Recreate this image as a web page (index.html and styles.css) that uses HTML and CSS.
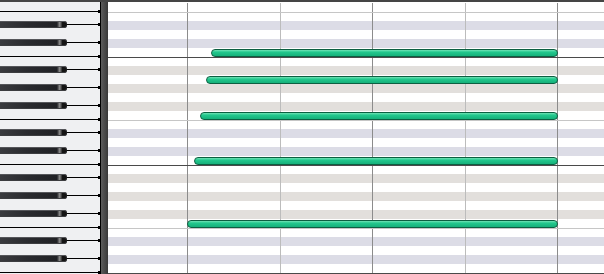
FILE: index.html
```html
<!DOCTYPE html>
<html lang="en">

<head>
    <meta charset="UTF-8">
    <meta name="viewport" content="width=device-width, initial-scale=1.0">
    <title>Piano roll</title>
    <link rel="stylesheet" href="styles.css">
</head>

<body>

    <div class="roll">
        <div class="keys"></div>
        <div class="split"></div>
        <div class="grid"></div>
    </div>

    <script>
        // rows from the top, one octave, repeated
        let scale = ['F', 'E', 'D#', 'D', 'C#', 'C', 'B', 'A#', 'A', 'G#', 'G', 'F#'];

        let notes = [
            { row: 5, start: 103, len: 347 },
            { row: 8, start: 98, len: 352 },
            { row: 12, start: 92, len: 358 },
            { row: 17, start: 86, len: 364 },
            { row: 24, start: 79, len: 371 }
        ];

        let elKeys = document.querySelector('.keys');
        let elGrid = document.querySelector('.grid');

        for (let i = 0; i < 31; i++) {
            let name = scale[i % 12];
            let black = name.indexOf('#') > -1;
            let group = 'CDE'.indexOf(name[0]) > -1 ? 'lav' : 'bei';

            let key = '';
            if (black) {
                key = '<div class="bk"></div><div class="tick"></div>';
            } else if (name == 'E' || name == 'B') {
                key = '<div class="ln"></div>';
            }
            elKeys.innerHTML += `<div class="kr">${key}</div>`;

            let cls = 'gr';
            if (black) cls += ' ' + group;
            if (name == 'E') cls += ' e';
            if (name == 'B') cls += ' b';

            let note = '';
            notes.forEach(element => {
                if (element.row == i) {
                    note = `<div class="note" style="margin-left: ${element.start}px; width: ${element.len}px;"></div>`;
                }
            });
            elGrid.innerHTML += `<div class="${cls}">${note}</div>`;
        }
    </script>

</body>

</html>
```

FILE: styles.css
```css
body {
    margin: 0;
    background-color: #ffffff;
    overflow: hidden;
}

.roll {
    height: 272px;
    display: flex;
    border-top: 2px solid #454545;
}

.keys {
    width: 100px;
    padding-top: 1px;
    border-right: 1px solid #000000;
    background-color: #eff0f2;
    overflow: hidden;
}

.split {
    width: 7px;
    background: linear-gradient(to right, #5c5c5c, #474747 60%, #383838);
}

.grid {
    flex: 1;
    padding-top: 1px;
    overflow: hidden;
}

/* keyboard */

.kr {
    height: 9px;
    display: flex;
    align-items: flex-start;
}

.bk {
    width: 67px;
    height: 7px;
    box-sizing: border-box;
    border-radius: 0 3px 3px 0;
    background: linear-gradient(to right, #3a3b3f, #2a2b2f 40%, #202125 85%, #8a8a8a 89%, #5a5a5a 91%, #151515 93%, #111111);
    box-shadow: inset 0 1px #55565a, inset 0 -1px #3c3d40;
}

.tick,
.ln {
    flex: 1;
    height: 3px;
    background:
        linear-gradient(#000000, #000000) right center / 2px 3px no-repeat,
        linear-gradient(#000000, #000000) left center / 100% 1px no-repeat;
}

.tick {
    margin-top: 2px;
}

.ln {
    margin-top: -2px;
}

/* grid */

.gr {
    height: 9px;
    box-sizing: border-box;
    display: flex;
    background-color: #ffffff;
    background-image:
        linear-gradient(#8c8c8c, #8c8c8c),
        linear-gradient(#bcbcbc, #bcbcbc),
        linear-gradient(#8c8c8c, #8c8c8c),
        linear-gradient(#bcbcbc, #bcbcbc),
        linear-gradient(#8c8c8c, #8c8c8c);
    background-size: 1px 100%;
    background-position: 79px 0, 172px 0, 264px 0, 357px 0, 449px 0;
    background-repeat: no-repeat;
}

.gr.lav {
    background-color: #dcdce6;
}

.gr.bei {
    background-color: #e2dfdc;
}

.gr.e {
    border-top: 1px solid #c6c6c6;
}

.gr.b {
    border-top: 1px solid #4a4a4a;
}

.note {
    height: 8px;
    margin-top: 1px;
    box-sizing: border-box;
    border: 1px solid #0c5f41;
    border-radius: 4px;
    background: linear-gradient(#72e3b6, #22c88d 35%, #16b07a);
}
```
